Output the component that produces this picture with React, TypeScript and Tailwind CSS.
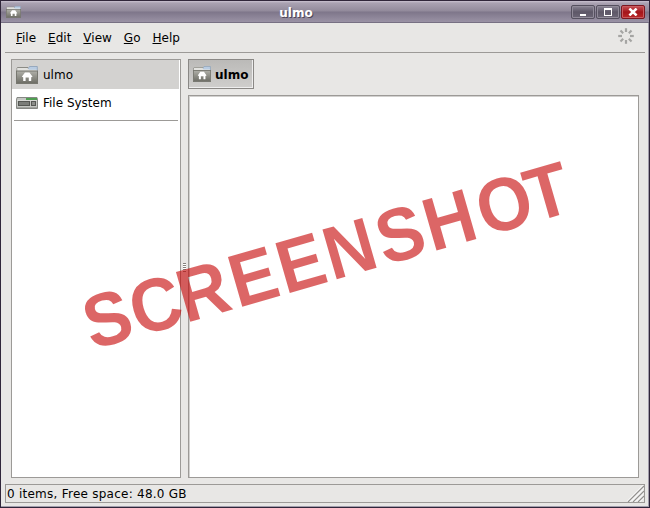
import React from "react";

function HomeFolder({ className }: { className: string }) {
  return (
    <svg viewBox="0 0 22 18" className={className} preserveAspectRatio="none">
      <defs>
        <linearGradient id="folder" x1="0" y1="0" x2="0" y2="1">
          <stop offset="0" stopColor="#b0b0a9" />
          <stop offset="1" stopColor="#6c6c64" />
        </linearGradient>
      </defs>
      <path d="M0.5 17V2.5L1.5 1H12V17Z" fill="#8b8b85" />
      <path d="M11.5 3.5L13.5 0.5H21.3V6H11.5Z" fill="#b9cce2" stroke="#8ba0b8" strokeWidth="0.8" />
      <path d="M1.2 2H11.5L13 3.8H20.8V5.2H1.2Z" fill="#e2e2df" />
      <rect x="0.5" y="5" width="21" height="12.5" fill="url(#folder)" stroke="#77776f" />
      <path d="M5.8 10.8L9 6.4H13.4L16.6 10.8L15.2 11.2V15H12.8V11.6H9.6V15H7.2V11.2Z" fill="#fff" />
    </svg>
  );
}

function Drive() {
  return (
    <svg viewBox="0 0 22 12" className="h-3 w-[22px]">
      <path d="M1 0.5H21L21.5 3V11.5H0.5V3Z" fill="#c4c6c2" stroke="#858783" />
      <rect x="10" y="1" width="11" height="2" fill="#4f9e52" />
      <path d="M1 3.5H21" stroke="#d9dad7" />
      <rect x="2.5" y="4.5" width="11" height="4" fill="#7b7d79" stroke="#555753" />
      <rect x="15.5" y="4.5" width="4" height="4" fill="#8c8e8a" stroke="#555753" />
      <path d="M1 10.5H21" stroke="#a0a29e" />
    </svg>
  );
}

function Throbber() {
  return (
    <svg viewBox="-8 -8 16 16" className="h-4 w-4" stroke="#a5a5a3" strokeWidth="2.2">
      {[0, 45, 90, 135, 180, 225, 270, 315].map((a) => (
        <path key={a} d="M0 -4V-7.8" transform={`rotate(${a})`} />
      ))}
    </svg>
  );
}

function MenuItem({ label }: { label: string }) {
  return (
    <div>
      <span className="underline decoration-1 underline-offset-[1px]">{label[0]}</span>
      {label.slice(1)}
    </div>
  );
}

const greyButton =
  "flex h-[14px] w-6 items-center justify-center rounded-[2px] border border-[#55505f] bg-[linear-gradient(#8b8595,#5d5767_50%,#6c6677)] shadow-[inset_0_0_0_1px_#918b99]";

export default function App() {
  return (
    <div className="relative flex h-[508px] w-[650px] flex-col overflow-hidden border border-[#30263a] bg-[#e8e7e5] font-['DejaVu_Sans',sans-serif] text-[12px] leading-[14px] text-black shadow-[inset_-1px_-1px_0_#a29dab]">
      <header className="flex h-[22px] shrink-0 items-center border-b border-[#777083] bg-[linear-gradient(#cac2d1_0px,#aaa2b2_2px,#928a9b_10px,#7e768a_11px,#9a92a5_21px)] pl-[5px] pr-1">
        <HomeFolder className="h-3 w-[15px]" />
        <div className="flex-1 pt-[2px] text-center font-bold text-white [text-shadow:1px_1px_0_#4d4658]">
          ulmo
        </div>
        <div className="flex gap-px">
          <div className={greyButton}>
            <div className="mt-[6px] h-[2px] w-[6px] bg-white" />
          </div>
          <div className={greyButton}>
            <div className="h-2 w-2 border border-t-2 border-white" />
          </div>
          <div className="flex h-[14px] w-6 items-center justify-center rounded-[2px] border border-[#7c1720] bg-[linear-gradient(#c95357,#a3151b_50%,#bc2929)] shadow-[inset_0_0_0_1px_#c85c60]">
            <svg viewBox="0 0 10 8" className="h-2 w-[10px]">
              <path d="M1.4 0.6L8.6 7.4M8.6 0.6L1.4 7.4" stroke="#fff" strokeWidth="2.6" />
            </svg>
          </div>
        </div>
      </header>

      <nav className="mx-1 flex h-[30px] shrink-0 items-center gap-3 border-b border-[#9c9a97] px-[11px]">
        <MenuItem label="File" />
        <MenuItem label="Edit" />
        <MenuItem label="View" />
        <MenuItem label="Go" />
        <MenuItem label="Help" />
        <div className="ml-auto pb-1">
          <Throbber />
        </div>
      </nav>

      <main className="flex min-h-0 flex-1 px-[10px] py-[6px]">
        <aside className="w-[170px] border border-[#9c9a97] bg-white pr-px">
          <div className="flex h-[29px] items-center gap-[5px] bg-[#d3d2d0] pl-1">
            <HomeFolder className="h-[18px] w-[22px]" />
            <span>ulmo</span>
          </div>
          <div className="flex h-7 items-center gap-[5px] pl-1">
            <Drive />
            <span>File System</span>
          </div>
          <div className="ml-[2px] mr-px mt-[3px] h-px bg-[#9c9a97]" />
        </aside>
        <div className="flex w-[7px] items-center justify-center">
          <div className="mb-[2px] h-[9px] w-[3px] bg-[repeating-linear-gradient(#85837f_0px_1px,#fff_1px_2px)]" />
        </div>
        <section className="flex flex-1 flex-col gap-[6px]">
          <div className="flex h-[30px] w-[66px] items-center gap-1 border border-[#8a8885] bg-[linear-gradient(#bbbab8,#cfcecc)] pl-1 font-bold shadow-[inset_-1px_-1px_0_#eee]">
            <HomeFolder className="h-4 w-[18px]" />
            <span className="pt-px">ulmo</span>
          </div>
          <div className="flex-1 border border-[#9c9a97] bg-white shadow-[inset_1px_1px_0_#d2d1cf]" />
        </section>
      </main>

      <footer className="mx-1 mb-1 flex h-[19px] shrink-0 items-center justify-between border border-[#9c9a97] pl-[1px]">
        <span className="tracking-[0.25px]">0 items, Free space: 48.0 GB</span>
        <svg viewBox="0 0 17 17" className="h-[17px] w-[17px]" fill="none">
          <path d="M1 17L17 1M6 17L17 6M11 17L17 11" stroke="#fff" strokeWidth="3" />
          <path d="M1 17L17 1M6 17L17 6M11 17L17 11" stroke="#92908d" strokeWidth="1.3" />
        </svg>
      </footer>

      <svg viewBox="0 0 650 508" className="pointer-events-none absolute -left-px -top-px h-[508px] w-[650px]">
        <text
          transform="translate(190 321.7) rotate(-16.1) scale(0.94 1)"
          x="-108.4"
          dx="0 1 -1.5 3.5 2.6 2 4 2.2 4.6 -4.4"
          className="fill-[rgba(197,0,0,0.6)] font-['Liberation_Sans',Arial,sans-serif] text-[75px] font-bold"
        >
          SCREENSHOT
        </text>
      </svg>
    </div>
  );
}
